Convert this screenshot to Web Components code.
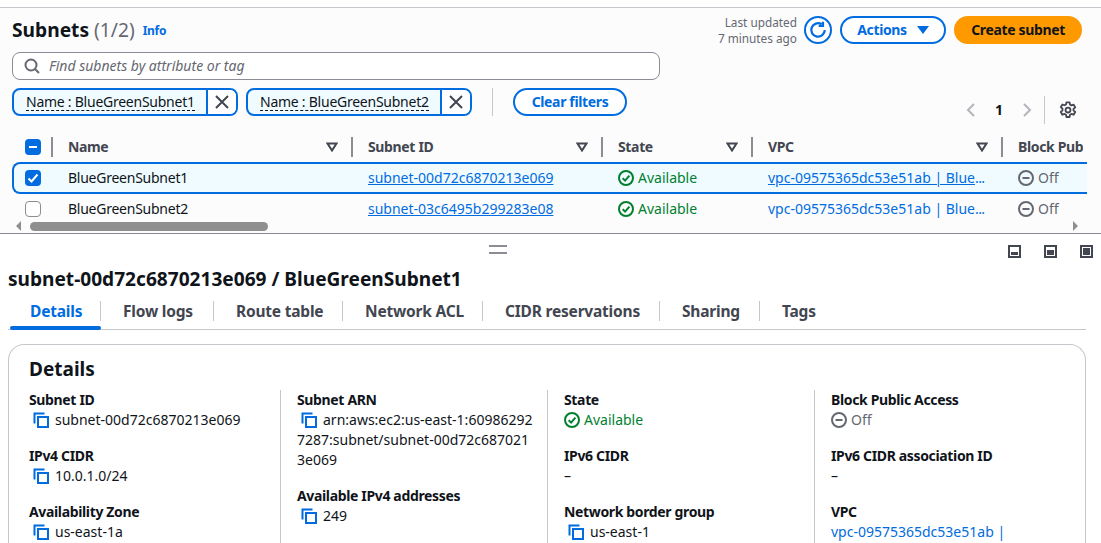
<!DOCTYPE html>
<html lang="en"><head><meta charset="utf-8"><title>Subnets</title>
<style>
html,body{margin:0;padding:0;height:543px;overflow:hidden;background:#fff}
body{font:14px/20px "Noto Sans",sans-serif;color:#0f141a}
</style></head><body>
<aws-page>
  <subnet-list></subnet-list>
  <split-bar></split-bar>
  <subnet-details></subnet-details>
</aws-page>
<script>
const ICONS={
 copy:'<svg width="16" height="16" viewBox="0 0 16 16" fill="none" stroke="#006ce0" stroke-width="2"><path d="M1.5 11.5V1.5H11.5"/><rect x="5" y="5" width="10" height="10"/></svg>',
 ok:'<svg width="16" height="16" viewBox="0 0 16 16" fill="none" stroke="#00802f" stroke-width="2"><circle cx="8" cy="8" r="7"/><path d="M4.7 8.2 7.1 10.6 11.4 5.6"/></svg>',
 off:'<svg width="16" height="16" viewBox="0 0 16 16" fill="none" stroke="#656871" stroke-width="2"><circle cx="8" cy="8" r="7"/><path d="M4.5 8H11.5"/></svg>',
 x:'<svg width="16" height="16" viewBox="0 0 16 16" fill="none" stroke="#424650" stroke-width="2"><path d="M2 2 14 14M14 2 2 14"/></svg>',
 search:'<svg width="16" height="16" viewBox="0 0 16 16" fill="none" stroke="#656871" stroke-width="2"><circle cx="7" cy="7" r="5.5"/><path d="M11 11 15 15"/></svg>',
 sort:'<svg width="12" height="10" viewBox="0 0 12 10" fill="none" stroke="#424650" stroke-width="2"><path d="M1.5 1.5H10.5L6 8.5Z"/></svg>',
 gear:'<svg width="18" height="18" viewBox="0 0 16 16" fill="none" stroke="#424650" stroke-width="1.6" stroke-linejoin="round"><circle cx="8" cy="8" r="2.2"/><path d="M6.6 1.2h2.8l.4 2 1.3.7 1.9-.7 1.4 2.4-1.5 1.4v1.4l1.5 1.4-1.4 2.4-1.9-.7-1.3.7-.4 2H6.6l-.4-2-1.3-.7-1.9.7-1.4-2.4 1.5-1.4V6.9L1.6 5.5 3 3.1l1.9.7 1.3-.7z"/></svg>',
 refresh:'<svg width="18" height="18" viewBox="0 0 16 16" fill="none" stroke="#006ce0" stroke-width="2"><path d="M14 8A6 6 0 1 1 11.2 2.9"/><path d="M12.4 .6V4.4H8.6"/></svg>'
};
function def(name,css,html,init){
  customElements.define(name,class extends HTMLElement{
    connectedCallback(){
      if(this.shadowRoot)return;
      const r=this.attachShadow({mode:'open'});
      r.innerHTML='<style>'+css+'</style>'+(typeof html==='function'?html(this):html);
      if(init)init(this,r);
    }
  });
}
const attr=(e,n,d='')=>e.getAttribute(n)??d;
const COLS='grid-template-columns:51px 300px 250px 150px 250px 86px';
const BOLD='font-weight:700;letter-spacing:-.35px';

def('aws-page',':host{display:block;width:1101px}','<slot></slot>');
def('aws-icon',':host{display:inline-flex;flex:none}',e=>ICONS[attr(e,'name')]);

def('aws-button',`:host{display:inline-flex}
 button{height:28px;box-sizing:border-box;border:2px solid #006ce0;background:#fff;color:#006ce0;border-radius:20px;font:700 14px/20px "Noto Sans",sans-serif;letter-spacing:-.35px;display:flex;align-items:center;justify-content:center;gap:10px;padding:0;cursor:pointer;width:100%}
 :host([primary]) button{background:#ff9900;border-color:#ff9900;color:#0f141a}
 .caret{width:0;height:0;border-left:6px solid transparent;border-right:6px solid transparent;border-top:8px solid #006ce0}
`,e=>`<button part="b" style="width:${attr(e,'w')}px"><slot></slot>${e.hasAttribute('caret')?'<span class="caret"></span>':''}</button>`);

def('filter-chip',`:host{display:inline-flex;width:226px;height:28px;box-sizing:border-box;border:2px solid #006ce0;border-radius:8px;overflow:hidden;background:#f0fbff}
 .t{flex:1;padding-left:12px;display:flex;align-items:center;white-space:nowrap;letter-spacing:-.25px}
 .t span{border-bottom:1px dashed #0f141a;line-height:17px}
 .x{width:28px;border-left:2px solid #006ce0;background:#fff;display:flex;align-items:center;justify-content:center}
`,e=>`<div class="t"><span><slot></slot></span></div><div class="x"><aws-icon name="x"></aws-icon></div>`);

def('check-box',`:host{display:inline-flex;width:16px;height:16px;box-sizing:border-box;border-radius:4px}
 :host([state=on]),:host([state=mixed]){background:#006ce0}
 :host([state=off]){border:1px solid #8c8c94;background:#fff}
 svg{display:block}
`,e=>{const s=attr(e,'state');
 if(s==='on')return '<svg width="16" height="16" viewBox="0 0 16 16" fill="none" stroke="#fff" stroke-width="2"><path d="M3.5 8.5 6.5 11.5 12.5 4.5"/></svg>';
 if(s==='mixed')return '<svg width="16" height="16" viewBox="0 0 16 16" fill="none" stroke="#fff" stroke-width="2"><path d="M4 8H12"/></svg>';
 return '';});

def('head-cell',`:host{display:flex;align-items:center;height:20px;box-sizing:border-box;padding:0 13px 0 15px;border-left:2px solid #8c8c94;${BOLD};color:#424650;white-space:nowrap;overflow:hidden}
 :host([nosort]){margin-right:4px;padding-right:0}
 .l{flex:1}
`,e=>`<span class="l"><slot></slot></span>${e.hasAttribute('nosort')?'':'<aws-icon name="sort"></aws-icon>'}`);

def('status-text',`:host{display:inline-flex;align-items:center;gap:4px;white-space:nowrap;color:#00802f;vertical-align:top;height:20px}
 :host([off]){color:#656871}
`,e=>`<aws-icon name="${e.hasAttribute('off')?'off':'ok'}"></aws-icon><slot></slot>`);

def('subnet-row',`:host{display:grid;grid-template-columns:52px 300px 250px 150px 250px 85px;height:30px;box-sizing:border-box;align-items:center;color:#0f141a}
 :host([selected]){background:#f0fbff;border:2px solid #006ce0;border-right:0;border-radius:8px 0 0 8px;height:32px;margin-left:12px;grid-template-columns:38px 300px 250px 150px 250px 85px}
 .c{padding-left:16px;white-space:nowrap;overflow:hidden}
 .n{letter-spacing:-.25px}
 .cb{padding:0 0 0 25px;display:flex}
 :host([selected]) .cb{padding-left:11px}
 a{color:#006ce0;text-decoration:underline}
 .v{display:block;color:#006ce0}
 .v i{font-style:normal;letter-spacing:-.6px}
 :host([selected]) .v u{text-decoration-thickness:1px}
 :host(:not([selected])) .v u{text-decoration:none}
`,e=>`<div class="cb"><check-box state="${e.hasAttribute('selected')?'on':'off'}"></check-box></div>
 <div class="c n">${attr(e,'name')}</div>
 <div class="c"><a href="#">${attr(e,'sid')}</a></div>
 <div class="c"><status-text>Available</status-text></div>
 <div class="c"><span class="v"><u>vpc-09575365dc53e51ab | Blue</u><i>...</i></span></div>
 <div class="c"><status-text off>Off</status-text></div>`);

def('fake-scrollbar',`:host{display:flex;align-items:center;height:10px;width:1087px}
 .a{width:0;height:0;border-top:5px solid transparent;border-bottom:5px solid transparent}
 .l{border-right:5px solid #8f8f8f;margin-left:16px}
 .t{width:238px;height:9px;border-radius:5px;background:#8f8f8f;margin-left:9px}
 .r{border-left:5px solid #8f8f8f;margin-left:auto;margin-right:9px}
`,'<span class="a l"></span><span class="t"></span><span class="a r"></span>');

def('subnet-list',`:host{display:block;background:#fcfcfd}
 .top{height:8px;box-sizing:border-box;border-bottom:1px solid #c6c6cd;background:#fff}
 .head{height:44px;display:flex;align-items:center;padding:0 19px 0 12px}
 h1{margin:0;font:700 19.2px/24px "Noto Sans",sans-serif;white-space:nowrap}
 h1 span{font-weight:400;color:#656871}
 .info{font-size:12px;font-weight:700;letter-spacing:-.25px;color:#006ce0;margin:2px 0 0 8px}
 .upd{margin-left:auto;font-size:11.8px;line-height:16px;color:#656871;text-align:right;margin-right:7px}
 .btns{display:flex;gap:8px}
 .round{width:28px;height:28px;box-sizing:border-box;border:2px solid #006ce0;border-radius:50%;display:flex;align-items:center;justify-content:center;background:#fff}
 .search{margin-left:12px;width:648px;height:28px;box-sizing:border-box;border:1px solid #8c8c94;border-radius:8px;background:#fff;display:flex;align-items:center;gap:9px;padding-left:11px;font-style:italic;color:#656871}
 .filters{display:flex;height:36px;padding:8px 0 0 12px;align-items:flex-start}
 .filters filter-chip+filter-chip{margin-left:8px}
 .vs{width:1px;height:28px;background:#c6c6cd;margin:0 20px}
 .pager{margin-left:auto;display:flex;align-items:center;height:28px;margin-top:8px;padding-right:24px}
 .pager svg{display:block}
 .pager b{width:30px;text-align:center;margin:0 7px;font-weight:700}
 .ps{width:1px;height:28px;background:#c6c6cd;margin:0 14px 0 11px}
 .wrap{width:1087px;overflow:hidden;height:97px}
 .hr{display:grid;${COLS};height:38px;align-items:center;padding-top:7px;box-sizing:border-box}
 .hc{padding-left:25px;display:flex;height:16px}
 .rule{height:2px}
`,`<div class="top"></div>
 <div class="head">
  <h1>Subnets <span>(1/2)</span></h1><span class="info">Info</span>
  <div class="upd">Last updated<br>7 minutes ago</div>
  <div class="btns">
   <div class="round"><aws-icon name="refresh"></aws-icon></div>
   <aws-button w="106" caret>Actions</aws-button>
   <aws-button w="128" primary>Create subnet</aws-button>
  </div>
 </div>
 <div class="search"><aws-icon name="search"></aws-icon><span>Find subnets by attribute or tag</span></div>
 <div class="filters">
  <filter-chip>Name : BlueGreenSubnet1</filter-chip>
  <filter-chip>Name : BlueGreenSubnet2</filter-chip>
  <span class="vs"></span>
  <aws-button w="114">Clear filters</aws-button>
  <div class="pager">
   <svg width="12" height="14" viewBox="0 0 12 14" fill="none" stroke="#b4b4bb" stroke-width="2"><path d="M9 1 3 7 9 13"/></svg>
   <b>1</b>
   <svg width="12" height="14" viewBox="0 0 12 14" fill="none" stroke="#b4b4bb" stroke-width="2"><path d="M3 1 9 7 3 13"/></svg>
   <span class="ps"></span>
   <aws-icon name="gear"></aws-icon>
  </div>
 </div>
 <div class="wrap">
  <div class="hr">
   <div class="hc"><check-box state="mixed"></check-box></div>
   <head-cell>Name</head-cell>
   <head-cell>Subnet ID</head-cell>
   <head-cell>State</head-cell>
   <head-cell>VPC</head-cell>
   <head-cell nosort>Block Public Access</head-cell>
  </div>
  <subnet-row selected name="BlueGreenSubnet1" sid="subnet-00d72c6870213e069"></subnet-row>
  <subnet-row name="BlueGreenSubnet2" sid="subnet-03c6495b299283e08"></subnet-row>
 </div>
 <fake-scrollbar></fake-scrollbar>
 <div class="rule"></div>`);

def('split-bar',`:host{display:flex;align-items:center;height:34px;box-sizing:border-box;border-top:1px solid #8c8c94;padding-left:489px;background:#fff}
 .h{width:18px;height:5px;border-top:2px solid #8c8c94;border-bottom:2px solid #8c8c94;margin-top:-2px}
 .i{margin-left:auto;display:flex;gap:23px;padding-right:8px;margin-top:2px}
 .b{width:13px;height:13px;box-sizing:border-box;border:2px solid #424650;display:flex;align-items:flex-end;padding:1px;background:#fff}
 .b i{display:block;width:100%;background:#424650}
`,`<span class="h"></span><div class="i">
 <span class="b"><i style="height:3px"></i></span><span class="b"><i style="height:5px"></i></span><span class="b"><i style="height:7px"></i></span></div>`);

const TABS=[['Details',91],['Flow logs',113],['Route table',129],['Network ACL',140],['CIDR reservations',177],['Sharing',100],['Tags',80]];
def('tab-bar',`:host{display:flex;height:36px;box-sizing:border-box;margin:0 15px 0 8px;border-bottom:1px solid #c6c6cd;padding-left:2px;align-items:flex-start}
 .t{position:relative;height:35px;box-sizing:border-box;display:flex;align-items:center;font-size:15.5px;font-weight:700;letter-spacing:-.2px;color:#424650;white-space:nowrap;padding:0 0 2px 22px}
 .t::after{content:"";width:1px;height:20px;background:#c6c6cd;position:absolute;right:0;top:7px}
 .t:last-child::after{display:none}
 .t.on{color:#006ce0;padding-left:20px}
 .t.on::before{content:"";position:absolute;left:0;right:0;bottom:-1px;height:4px;background:#006ce0;border-radius:2px}
`,TABS.map(([t,w],i)=>`<div class="t${i?'':' on'}" style="width:${w}px">${t}</div>`).join(''));

def('detail-item',`:host{display:block;margin-bottom:16px}
 .l{${BOLD};white-space:nowrap}
 .v{word-break:break-all}
 .v aws-icon{vertical-align:-3px;margin:0 6px 0 4px}
`,e=>`<div class="l">${attr(e,'label')}</div><div class="v">${e.hasAttribute('nocopy')?'':'<aws-icon name="copy"></aws-icon>'}<slot></slot></div>`);

def('subnet-details',`:host{display:block;background:#fff}
 h2{margin:0;font:700 19.1px/24px "Noto Sans",sans-serif;padding-left:8px;height:27px;white-space:nowrap}
 .card{margin:14px 15px 0 8px;border:1px solid #c6c6cd;border-bottom:0;border-radius:16px 16px 0 0;height:260px;box-sizing:border-box;padding-top:12px}
 h3{margin:0 0 0 20px;font:700 19px/24px "Noto Sans",sans-serif}
 .g{display:grid;grid-template-columns:271px 267px 267px 1fr;margin-top:9px}
 .col{padding:0 11px 0 16px;min-height:200px}
 .col:first-child{padding-left:20px;border:0}
 .col+.col{border-left:1px solid #c6c6cd}
 a{color:#006ce0;text-decoration:none}
`,`<h2>subnet-00d72c6870213e069 / BlueGreenSubnet1</h2>
 <tab-bar></tab-bar>
 <div class="card"><h3>Details</h3><div class="g">
  <div class="col">
   <detail-item label="Subnet ID">subnet-00d72c6870213e069</detail-item>
   <detail-item label="IPv4 CIDR">10.0.1.0/24</detail-item>
   <detail-item label="Availability Zone">us-east-1a</detail-item>
  </div>
  <div class="col">
   <detail-item label="Subnet ARN">arn:aws:ec2:us-east-1:609862927287:subnet/subnet-00d72c6870213e069</detail-item>
   <detail-item label="Available IPv4 addresses">249</detail-item>
  </div>
  <div class="col">
   <detail-item label="State" nocopy><status-text>Available</status-text></detail-item>
   <detail-item label="IPv6 CIDR" nocopy>–</detail-item>
   <detail-item label="Network border group">us-east-1</detail-item>
  </div>
  <div class="col">
   <detail-item label="Block Public Access" nocopy><status-text off>Off</status-text></detail-item>
   <detail-item label="IPv6 CIDR association ID" nocopy>–</detail-item>
   <detail-item label="VPC" nocopy><a href="#">vpc-09575365dc53e51ab |</a></detail-item>
  </div>
 </div></div>`);
</script>
</body></html>
